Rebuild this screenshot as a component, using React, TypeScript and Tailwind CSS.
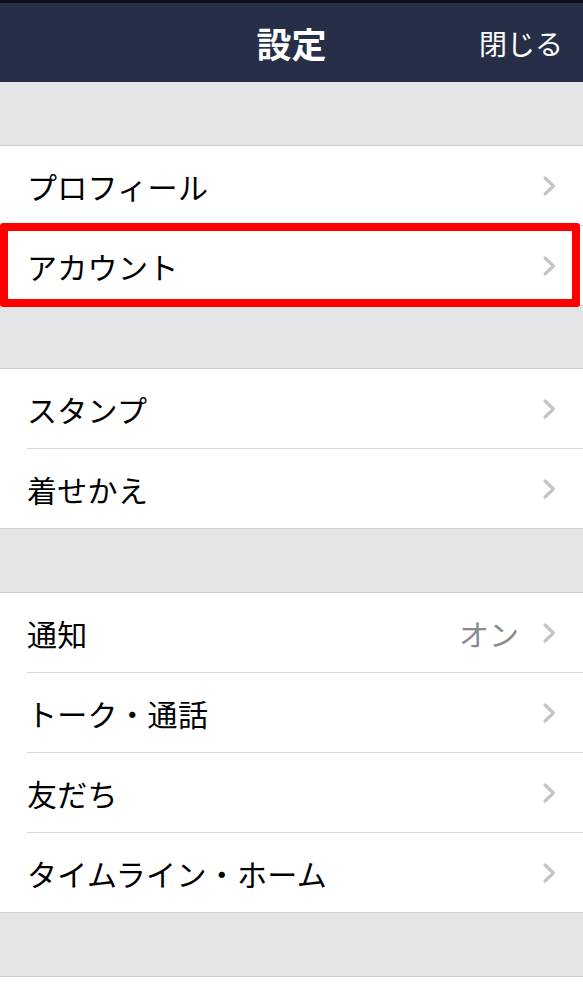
import React from "react";

const font = { fontFamily: '"Noto Sans CJK JP", "Noto Sans", sans-serif' };

function Chevron() {
  return (
    <svg width="16" height="22" viewBox="0 0 16 22" className="shrink-0">
      <polyline points="4,3 12.5,11 4,19" fill="none" stroke="#c5c5c8" strokeWidth="3.2" strokeLinecap="round" strokeLinejoin="round" />
    </svg>
  );
}

function Row({ label, value, last, highlight }: { label: string; value?: string; last?: boolean; highlight?: boolean }) {
  return (
    <div className="relative bg-white">
      <div className="h-[79px] flex items-center pl-[27px] pr-[26px]">
        <span className="flex-1 text-[30px] text-black leading-none tracking-[0.3px]">{label}</span>
        {value && <span className="text-[30px] text-[#8a8a8e] leading-none mr-[22px]">{value}</span>}
        <Chevron />
      </div>
      {!last && <div className="ml-[27px] h-px bg-[#d6d6d8]" />}
      {highlight && (
        <div className="absolute left-0 right-[3px] top-[-3px] bottom-[-2px] border-[8px] border-[#ff0000] rounded-[3px]" />
      )}
    </div>
  );
}

function Section({ children }: { children: React.ReactNode }) {
  return <div className="border-y border-[#cfcfd2] bg-white">{children}</div>;
}

export default function App() {
  return (
    <div className="w-[583px] h-[1000px] bg-white overflow-hidden" style={font}>
      <div className="h-[82px] bg-[#262f47] border-t-[3px] border-[#0e1016] flex items-center justify-center relative">
        <span className="text-white text-[35px] font-bold leading-none">設定</span>
        <span className="absolute right-[20px] text-white text-[28px] leading-none">閉じる</span>
      </div>
      <div className="h-[63px] bg-[#e4e5e7]" />
      <Section>
        <Row label="プロフィール" />
        <Row label="アカウント" last highlight />
      </Section>
      <div className="h-[62px] bg-[#e4e5e7]" />
      <Section>
        <Row label="スタンプ" />
        <Row label="着せかえ" last />
      </Section>
      <div className="h-[63px] bg-[#e4e5e7]" />
      <Section>
        <Row label="通知" value="オン" />
        <Row label="トーク・通話" />
        <Row label="友だち" />
        <Row label="タイムライン・ホーム" last />
      </Section>
      <div className="h-[64px] bg-[#e4e5e7] border-b border-[#cfcfd2]" />
    </div>
  );
}
